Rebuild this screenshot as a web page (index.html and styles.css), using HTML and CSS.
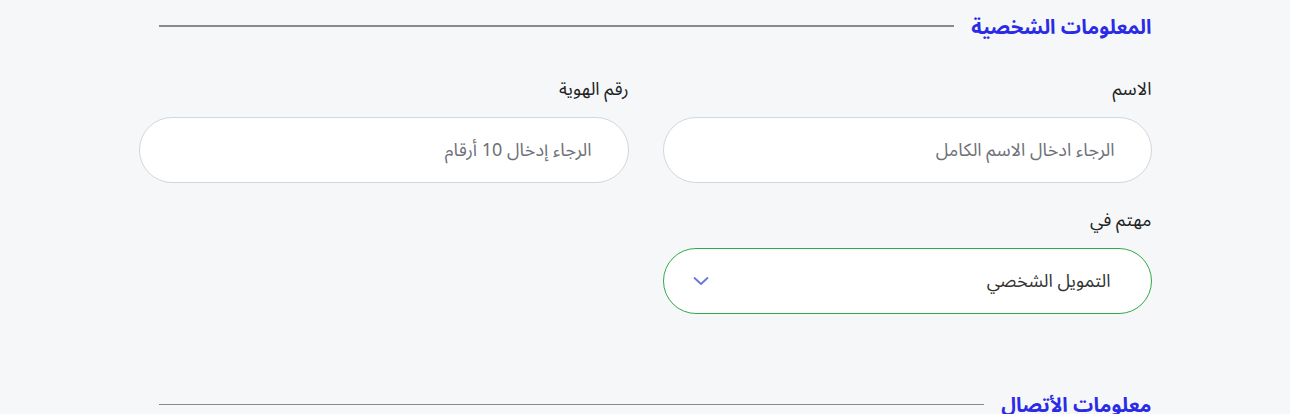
FILE: index.html
```html
<!DOCTYPE html>
<html lang="ar" dir="rtl">
<head>
    <meta charset="UTF-8">
    <meta name="viewport" content="width=device-width, initial-scale=1.0">
    <title>طلب تمويل</title>
    <link rel="stylesheet" href="styles.css">
</head>
<body>
    <div class="container">
        <div class="section-title">
            <h2>المعلومات الشخصية</h2>
            <span class="rule"></span>
        </div>
        <form class="fields">
            <div class="field">
                <label for="name">الاسم</label>
                <input type="text" id="name" name="name" placeholder="الرجاء ادخال الاسم الكامل">
            </div>
            <div class="field">
                <label for="idnum">رقم الهوية</label>
                <input type="text" id="idnum" name="idnum" placeholder="الرجاء إدخال 10 أرقام">
            </div>
            <div class="field">
                <label for="interest">مهتم في</label>
                <div class="select-wrap">
                    <select id="interest" name="interest">
                        <option>التمويل الشخصي</option>
                        <option>التمويل العقاري</option>
                    </select>
                    <svg class="chevron" width="16" height="10" viewBox="0 0 16 10">
                        <path d="M1.5 2 L8 8 L14.5 2" fill="none" stroke="#6675e0" stroke-width="1.8" stroke-linecap="round" stroke-linejoin="round"/>
                    </svg>
                </div>
            </div>
        </form>
        <div class="section-title second">
            <h2>معلومات الأتصال</h2>
            <span class="rule thin"></span>
        </div>
    </div>
</body>
</html>
```

FILE: styles.css
```css
body {
    font-family: "Noto Sans Arabic", "Noto Sans", "DejaVu Sans", sans-serif;
    margin: 0;
    padding: 0;
    background-color: #f6f7f9;
    color: #222;
}

.container {
    width: 1013px;
    margin: 0 auto;
    padding-top: 11px;
}

.section-title {
    display: flex;
    align-items: center;
    padding-left: 20px;
    height: 30px;
}

.section-title h2 {
    margin: 0;
    font-size: 20px;
    font-weight: bold;
    color: #2b2be6;
    line-height: 30px;
    padding-top: 3px;
    white-space: nowrap;
}

.rule {
    flex: 1;
    height: 2px;
    background-color: #8a8a8a;
    margin-right: 17px;
}

.rule.thin {
    height: 1px;
}

.second {
    margin-top: 75px;
}

.fields {
    display: grid;
    grid-template-columns: 489px 490px;
    column-gap: 34px;
    row-gap: 24px;
    margin-top: 35px;
}

.field label {
    display: block;
    font-size: 18px;
    line-height: 26px;
    margin-bottom: 15px;
    color: #222;
}

.field input,
.field select {
    width: 100%;
    height: 66px;
    box-sizing: border-box;
    border: 1px solid #d3d6db;
    border-radius: 33px;
    background-color: #fff;
    padding: 0 36px;
    font-family: inherit;
    font-size: 18px;
    color: #333;
    outline: none;
}

.field input::placeholder {
    color: #6e7178;
}

.select-wrap {
    position: relative;
}

.field select {
    appearance: none;
    -webkit-appearance: none;
    border-color: #2eaa4a;
    padding-right: 40px;
    color: #333;
}

.chevron {
    position: absolute;
    left: 30px;
    top: 28px;
}
```
